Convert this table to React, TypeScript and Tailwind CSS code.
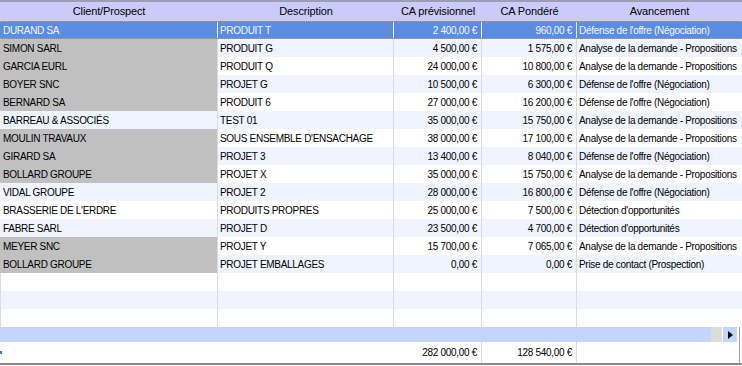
import React from "react";

type Row = {
  client: string;
  desc: string;
  prev: string;
  pond: string;
  av: string;
  gray: boolean;
};

const D = "Défense de l'offre (Négociation)";
const A = "Analyse de la demande - Propositions";
const T = "Détection d'opportunités";

const rows: Row[] = [
  { client: "DURAND SA", desc: "PRODUIT T", prev: "2 400,00 €", pond: "960,00 €", av: D, gray: false },
  { client: "SIMON SARL", desc: "PRODUIT G", prev: "4 500,00 €", pond: "1 575,00 €", av: A, gray: true },
  { client: "GARCIA EURL", desc: "PRODUIT Q", prev: "24 000,00 €", pond: "10 800,00 €", av: A, gray: true },
  { client: "BOYER SNC", desc: "PROJET G", prev: "10 500,00 €", pond: "6 300,00 €", av: D, gray: true },
  { client: "BERNARD SA", desc: "PRODUIT 6", prev: "27 000,00 €", pond: "16 200,00 €", av: D, gray: true },
  { client: "BARREAU & ASSOCIÉS", desc: "TEST 01", prev: "35 000,00 €", pond: "15 750,00 €", av: A, gray: false },
  { client: "MOULIN TRAVAUX", desc: "SOUS ENSEMBLE D'ENSACHAGE", prev: "38 000,00 €", pond: "17 100,00 €", av: A, gray: true },
  { client: "GIRARD SA", desc: "PROJET 3", prev: "13 400,00 €", pond: "8 040,00 €", av: D, gray: true },
  { client: "BOLLARD GROUPE", desc: "PROJET X", prev: "35 000,00 €", pond: "15 750,00 €", av: A, gray: true },
  { client: "VIDAL GROUPE", desc: "PROJET 2", prev: "28 000,00 €", pond: "16 800,00 €", av: D, gray: false },
  { client: "BRASSERIE DE L'ERDRE", desc: "PRODUITS PROPRES", prev: "25 000,00 €", pond: "7 500,00 €", av: T, gray: false },
  { client: "FABRE SARL", desc: "PROJET D", prev: "23 500,00 €", pond: "4 700,00 €", av: T, gray: false },
  { client: "MEYER SNC", desc: "PROJET Y", prev: "15 700,00 €", pond: "7 065,00 €", av: A, gray: true },
  { client: "BOLLARD GROUPE", desc: "PROJET EMBALLAGES", prev: "0,00 €", pond: "0,00 €", av: "Prise de contact (Prospection)", gray: true },
];

const cell = "h-full overflow-hidden whitespace-nowrap flex items-center";

export default function App() {
  return (
    <div className="w-[742px] h-[366px] bg-white overflow-hidden font-['Liberation_Sans',Arial,sans-serif] text-black select-none">
      <div className="h-[2px] bg-[#9d9db4]" />
      {/* header */}
      <div className="grid grid-cols-[218px_176px_88px_95px_165px] h-[19px] bg-[#cbcbfb] text-[11px] tracking-[-0.15px]">
        <div className="flex items-center justify-center">Client/Prospect</div>
        <div className="flex items-center justify-center">Description</div>
        <div className="flex items-center justify-center">CA prévisionnel</div>
        <div className="flex items-center justify-center">CA Pondéré</div>
        <div className="flex items-center justify-center">Avancement</div>
      </div>
      {/* rows */}
      <div className="text-[10px] tracking-[-0.3px]">
        {rows.map((r, i) => {
          const sel = i === 0;
          const bg = i % 2 === 1 ? "bg-[#eff4ff]" : "bg-white";
          if (sel) {
            return (
              <div
                key={i}
                className="grid grid-cols-[218px_176px_88px_95px_165px] h-[18px] bg-[#5a8de1] text-[#f2f4ff] border-y border-dotted border-[#d99a4c]"
              >
                <div className={`${cell} pl-[3px] border-r border-[#eef2ff]`}>{r.client}</div>
                <div className={`${cell} pl-[2px] border-r border-[#eef2ff]`}>{r.desc}</div>
                <div className={`${cell} justify-end pr-[4px] border-r border-[#eef2ff]`}>{r.prev}</div>
                <div className={`${cell} justify-end pr-[4px] border-r border-[#eef2ff]`}>{r.pond}</div>
                <div className={`${cell} pl-[2px]`}>{r.av}</div>
              </div>
            );
          }
          return (
            <div key={i} className={`grid grid-cols-[218px_176px_88px_95px_165px] h-[18px] ${bg}`}>
              <div
                className={`${cell} pl-[3px] border-r border-[#dcdcdc] ${r.gray ? "bg-[#c0c0c0]" : ""}`}
              >
                {r.client}
              </div>
              <div className={`${cell} pl-[2px] border-r border-[#dcdcdc]`}>{r.desc}</div>
              <div className={`${cell} justify-end pr-[4px] border-r border-[#dcdcdc]`}>{r.prev}</div>
              <div className={`${cell} justify-end pr-[4px] border-r border-[#dcdcdc]`}>{r.pond}</div>
              <div className={`${cell} pl-[2px]`}>{r.av}</div>
            </div>
          );
        })}
        {[0, 1, 2].map((k) => (
          <div
            key={`e${k}`}
            className={`grid grid-cols-[218px_176px_88px_95px_165px] h-[18px] ${k === 1 ? "bg-[#eff4ff]" : "bg-white"}`}
          >
            <div className="h-full border-l border-r border-[#dcdcdc]" />
            <div className="h-full border-r border-[#dcdcdc]" />
            <div className="h-full border-r border-[#dcdcdc]" />
            <div className="h-full border-r border-[#dcdcdc]" />
            <div className="h-full" />
          </div>
        ))}
      </div>
      {/* horizontal scrollbar */}
      <div className="flex h-[15px]">
        <div className="w-[711px] bg-[#c4d5fb]" />
        <div className="w-[11px] bg-[#dcdcdc]" />
        <div className="w-[1px] bg-white" />
        <div className="w-[14px] bg-[#c4d5fb] flex items-center justify-center">
          <svg width="5" height="8" viewBox="0 0 5 8">
            <polygon points="0,0 5,4 0,8" fill="#000" />
          </svg>
        </div>
        <div className="w-[2px] bg-white" />
        <div className="w-[1px] bg-[#a0a0a0]" />
        <div className="w-[2px] bg-white" />
      </div>
      {/* footer */}
      <div className="grid grid-cols-[218px_176px_88px_95px_165px] h-[21px] text-[10px] tracking-[-0.3px]">
        <div className="h-full flex items-center">
          <div className="w-[2px] h-[3px] bg-[#3b7bd9]" />
        </div>
        <div className="h-full" />
        <div className="h-full flex items-center justify-end pr-[4px] border-r border-[#dcdcdc]">282 000,00 €</div>
        <div className="h-full flex items-center justify-end pr-[4px] border-r border-[#dcdcdc]">128 540,00 €</div>
        <div className="h-full flex">
          <div className="flex-1" />
          <div className="w-[1px] bg-[#a0a0a0] mr-[2px]" />
        </div>
      </div>
      <div className="h-[2px] bg-[#8c8c8c]" />
    </div>
  );
}
